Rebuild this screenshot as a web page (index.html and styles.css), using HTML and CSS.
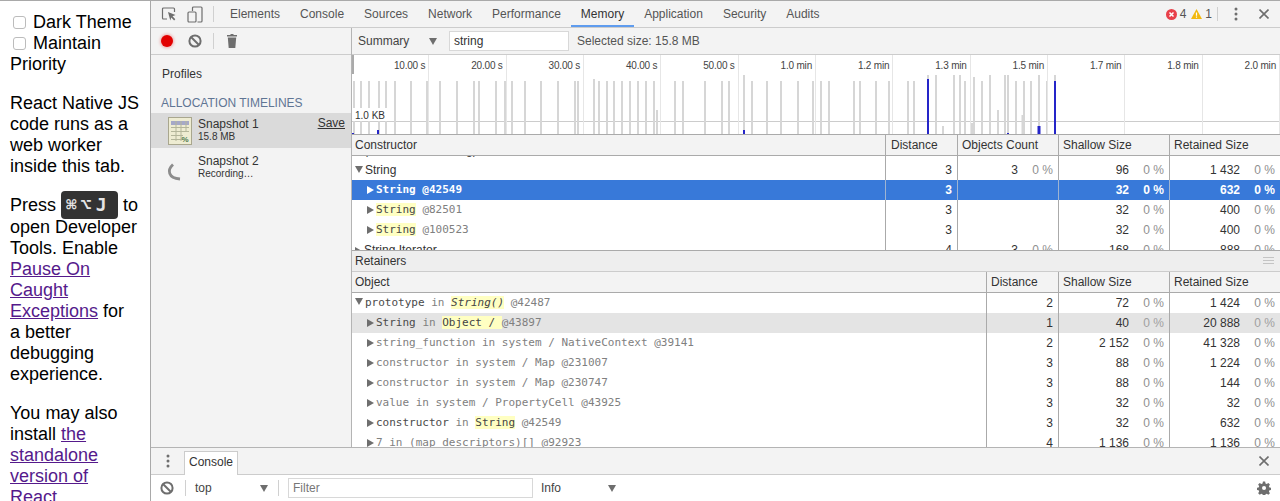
FILE: index.html
```html
<!DOCTYPE html>
<html lang="en">
<head>
<meta charset="utf-8">
<title>React Native Debugger</title>
<link rel="stylesheet" href="styles.css">
</head>
<body>
<div class="app">
  <aside class="page">
    <label class="opt"><input type="checkbox"> Dark Theme</label>
    <label class="opt"><input type="checkbox"> Maintain Priority</label>
    <p>React&nbsp;Native&nbsp;JS code runs as a web worker inside this tab.</p>
    <p>Press <kbd>⌘⌥J</kbd> to open Developer Tools. Enable <a href="#">Pause On Caught Exceptions</a> for a better debugging experience.</p>
    <p>You may also install <a href="#">the standalone version of React</a></p>
  </aside>
  <div class="devtools">
    <header class="tabbar">
      <div class="tool-icons">
        <svg class="ico" width="16" height="16" viewBox="0 0 16 16"><path d="M6 13H2.500a1 1 0 0 1-1-1V3a1 1 0 0 1 1-1h10a1 1 0 0 1 1 1v3" fill="none" stroke="#6e6e6e" stroke-width="1.200"/><path d="M7 6l7.500 3-3 1.200 2.800 3-1.200 1.200-2.800-3-1 3z" fill="#6e6e6e"/></svg>
        <svg class="ico" width="16" height="17" viewBox="0 0 16 17"><path d="M5.500 5V2a1 1 0 0 1 1-1h7.500a1 1 0 0 1 1 1v13a1 1 0 0 1-1 1h-3.500" fill="none" stroke="#6e6e6e" stroke-width="1.200"/><rect x="1" y="6" width="8" height="10" rx="1" fill="none" stroke="#6e6e6e" stroke-width="1.200"/></svg>
        <span class="vsep"></span>
      </div>
      <nav class="tabs">
        <span class="tab">Elements</span><span class="tab">Console</span><span class="tab">Sources</span><span class="tab">Network</span><span class="tab">Performance</span><span class="tab active">Memory</span><span class="tab">Application</span><span class="tab">Security</span><span class="tab">Audits</span>
      </nav>
      <div class="status">
        <svg width="11" height="11" viewBox="0 0 11 11"><circle cx="5.500" cy="5.500" r="5.500" fill="#e8404a"/><path d="M3.500 3.500l4 4M7.500 3.500l-4 4" stroke="#fff" stroke-width="1.500"/></svg>
        <span class="count">4</span>
        <svg class="warn" width="11" height="10" viewBox="0 0 11 10"><path d="M5.500 0L11 10H0z" fill="#f2b90f"/><path d="M5.500 3.500v3.200M5.500 7.600v1.200" stroke="#fff" stroke-width="1.200"/></svg>
        <span class="count">1</span>
        <span class="vsep"></span>
        <svg class="dots" width="4" height="14" viewBox="0 0 4 14"><circle cx="2" cy="2" r="1.500"/><circle cx="2" cy="7" r="1.500"/><circle cx="2" cy="12" r="1.500"/></svg>
        <svg class="close" width="10" height="10" viewBox="0 0 10 10"><path d="M.5.500l9 9M9.500.500l-9 9" stroke="#6e6e6e" stroke-width="1.600"/></svg>
      </div>
    </header>

    <div class="panel">
      <section class="sidebar">
        <div class="toolbar side-tools">
          <span class="rec"></span>
          <svg width="14" height="14" viewBox="0 0 14 14"><circle cx="7" cy="7" r="5.600" fill="none" stroke="#6e6e6e" stroke-width="2"/><path d="M3 3l8 8" stroke="#6e6e6e" stroke-width="2"/></svg>
          <span class="vsep"></span>
          <svg width="10" height="14" viewBox="0 0 10 14"><path d="M3.500 0h3v1H10v1.500H0V1h3.500zM.8 3.500h8.400L8.300 14H1.700z" fill="#6e6e6e"/></svg>
        </div>
        <div class="profiles">Profiles</div>
        <div class="group">ALLOCATION TIMELINES</div>
        <div class="snap selected">
          <svg class="snap-ico" width="24" height="28" viewBox="0 0 24 28"><rect x=".5" y=".5" width="23" height="27" fill="#eeecd2" stroke="#a9a78e"/><rect x="3" y="4" width="18" height="4" fill="#a6a9c8"/><path d="M3 10.500h18M3 14.500h18M3 18.500h12M3 22.500h12M8 4v20M13 4v20M18 4v11" stroke="#b4b69a"/><text x="13.500" y="25" class="snap-pct">%</text></svg>
          <div class="snap-text"><div class="snap-name">Snapshot 1</div><div class="snap-sub">15.8 MB</div></div>
          <span class="save">Save</span>
        </div>
        <div class="snap pending">
          <svg class="snap-ico" width="24" height="28" viewBox="0 0 24 28"><path d="M5 12.500C-1 18 0 26 12 27" fill="none" stroke="#8c8c8c" stroke-width="2.800"/></svg>
          <div class="snap-text"><div class="snap-name">Snapshot 2</div><div class="snap-sub">Recording…</div></div>
        </div>
      </section>

      <section class="main">
        <div class="toolbar main-tools">
          <span class="summary">Summary</span><span class="tri-down"></span>
          <span class="filter-box">string</span>
          <span class="selsize">Selected size: 15.8 MB</span>
        </div>

        <div class="overview">
          <svg class="chart" width="928" height="79" viewBox="0 0 928 79">
            <path class="hline" d="M0 66.500H928"/>
            <path class="bar" d="M2 26V79M9 26V79M17 26V79M27 26V79M34 26V79M43 26V79M59 26V79M75 26V79M88 26V79M105 26V79M122 26V79M127 26V79M144 26V79M153 26V79M160 26V79M173 26V79M189 26V79M206 26V79M223 26V79M226 26V79M242 24V79M247 26V79M255 26V79M262 26V79M270 26V79M278 26V79M286 26V79M294 26V79M302 26V79M305 55V79M323 26V79M331 26V79M353 26V79M370 26V79M377 26V79M392 20V79M400 26V79M415 26V79M429 26V79M446 26V79M461 26V79M469 26V79M477 26V79M502 26V79M508 26V79M524 26V79M537 26V79M556 26V79M562 26V79M576 20V79M584 20V79M591 71V79M602 20V79M608 20V79M613 26V79M622 22V79M630 26V79M638 20V79M646 55V79M653 20V79M656 20V79M664 26V79M672 26V79M679 26V79M687 20V79M695 26V79M703 20V79"/>
            <path class="bar wide" d="M620 68V79M671 60V79"/>
            <path class="blue" d="M1 78V79M26 75V79M392 75V79M576 24V79M656 78V79M703 26V79"/>
            <path class="blue wide" d="M687 71V79"/>
          </svg>
          <div class="ticks">
            <span>10.00 s</span><span>20.00 s</span><span>30.00 s</span><span>40.00 s</span><span>50.00 s</span><span>1.0 min</span><span>1.2 min</span><span>1.3 min</span><span>1.5 min</span><span>1.7 min</span><span>1.8 min</span><span>2.0 min</span>
          </div>
          <span class="thumb"></span>
          <span class="kb">1.0 KB</span>
        </div>

        <div class="row-top head">
          <div class="cell name">Constructor</div><div class="cell">Distance</div><div class="cell">Objects Count</div><div class="cell">Shallow Size</div><div class="cell last">Retained Size</div>
        </div>
        <div class="rows rows-top">
          <div class="row-top row clipped-first">
            <div class="cell name l1"><span class="arrow right"></span>(concatenated string)</div>
            <div class="cell num">4</div><div class="cell num"><span>4</span><i>0 %</i></div><div class="cell num"><span>1</span><i>0 %</i></div><div class="cell num last"><span>1</span><i>0 %</i></div>
          </div>
          <div class="row-top row">
            <div class="cell name l1"><span class="arrow down"></span>String</div>
            <div class="cell num">3</div><div class="cell num"><span>3</span><i>0 %</i></div><div class="cell num"><span>96</span><i>0 %</i></div><div class="cell num last"><span>1 432</span><i>0 %</i></div>
          </div>
          <div class="row-top row sel">
            <div class="cell name l2 code"><span class="arrow right"></span>String @42549</div>
            <div class="cell num">3</div><div class="cell num"></div><div class="cell num"><span>32</span><i>0 %</i></div><div class="cell num last"><span>632</span><i>0 %</i></div>
          </div>
          <div class="row-top row">
            <div class="cell name l2 code"><span class="arrow right"></span><mark>String</mark> <em>@82501</em></div>
            <div class="cell num">3</div><div class="cell num"></div><div class="cell num"><span>32</span><i>0 %</i></div><div class="cell num last"><span>400</span><i>0 %</i></div>
          </div>
          <div class="row-top row">
            <div class="cell name l2 code"><span class="arrow right"></span><mark>String</mark> <em>@100523</em></div>
            <div class="cell num">3</div><div class="cell num"></div><div class="cell num"><span>32</span><i>0 %</i></div><div class="cell num last"><span>400</span><i>0 %</i></div>
          </div>
          <div class="row-top row">
            <div class="cell name l1"><span class="arrow right"></span>String Iterator</div>
            <div class="cell num">4</div><div class="cell num"><span>3</span><i>0 %</i></div><div class="cell num"><span>168</span><i>0 %</i></div><div class="cell num last"><span>888</span><i>0 %</i></div>
          </div>
        </div>

        <div class="retainers"><span>Retainers</span>
          <svg width="11" height="8" viewBox="0 0 11 8"><path d="M0 .5h11M0 3.500h11M0 6.500h11" stroke="#c4c4c4"/></svg>
        </div>
        <div class="row-bot head">
          <div class="cell name">Object</div><div class="cell">Distance</div><div class="cell">Shallow Size</div><div class="cell last">Retained Size</div>
        </div>
        <div class="rows rows-bot">
          <div class="row-bot row">
            <div class="cell name l1 code"><span class="arrow down"></span><b>prototype</b> <em>in</em> <mark class="it">String()</mark> <em>@42487</em></div>
            <div class="cell num">2</div><div class="cell num"><span>72</span><i>0 %</i></div><div class="cell num last"><span>1 424</span><i>0 %</i></div>
          </div>
          <div class="row-bot row hl">
            <div class="cell name l2 code"><span class="arrow right"></span><b>String</b> <em>in</em> <mark>Object / </mark><em>@43897</em></div>
            <div class="cell num">1</div><div class="cell num"><span>40</span><i>0 %</i></div><div class="cell num last"><span>20 888</span><i>0 %</i></div>
          </div>
          <div class="row-bot row">
            <div class="cell name l2 code dim"><span class="arrow right"></span>string_function in system / NativeContext @39141</div>
            <div class="cell num">2</div><div class="cell num"><span>2 152</span><i>0 %</i></div><div class="cell num last"><span>41 328</span><i>0 %</i></div>
          </div>
          <div class="row-bot row">
            <div class="cell name l2 code dim"><span class="arrow right"></span>constructor in system / Map @231007</div>
            <div class="cell num">3</div><div class="cell num"><span>88</span><i>0 %</i></div><div class="cell num last"><span>1 224</span><i>0 %</i></div>
          </div>
          <div class="row-bot row">
            <div class="cell name l2 code dim"><span class="arrow right"></span>constructor in system / Map @230747</div>
            <div class="cell num">3</div><div class="cell num"><span>88</span><i>0 %</i></div><div class="cell num last"><span>144</span><i>0 %</i></div>
          </div>
          <div class="row-bot row">
            <div class="cell name l2 code dim"><span class="arrow right"></span>value in system / PropertyCell @43925</div>
            <div class="cell num">3</div><div class="cell num"><span>32</span><i>0 %</i></div><div class="cell num last"><span>32</span><i>0 %</i></div>
          </div>
          <div class="row-bot row">
            <div class="cell name l2 code"><span class="arrow right"></span><b>constructor</b> <em>in</em> <mark>String</mark> <em>@42549</em></div>
            <div class="cell num">3</div><div class="cell num"><span>32</span><i>0 %</i></div><div class="cell num last"><span>632</span><i>0 %</i></div>
          </div>
          <div class="row-bot row">
            <div class="cell name l2 code dim"><span class="arrow right"></span><b>7</b> in (map descriptors)[] @92923</div>
            <div class="cell num">4</div><div class="cell num"><span>1 136</span><i>0 %</i></div><div class="cell num last"><span>1 136</span><i>0 %</i></div>
          </div>
        </div>
      </section>
    </div>

    <footer class="drawer">
      <div class="drawer-tabs">
        <svg class="dots drawer-dots" width="4" height="14" viewBox="0 0 4 14"><circle cx="2" cy="2" r="1.500"/><circle cx="2" cy="7" r="1.500"/><circle cx="2" cy="12" r="1.500"/></svg>
        <span class="drawer-tab">Console</span>
        <svg class="close" width="10" height="10" viewBox="0 0 10 10"><path d="M.5.500l9 9M9.500.500l-9 9" stroke="#6e6e6e" stroke-width="1.600"/></svg>
      </div>
      <div class="console-bar">
        <svg width="14" height="14" viewBox="0 0 14 14"><circle cx="7" cy="7" r="5.600" fill="none" stroke="#6e6e6e" stroke-width="2"/><path d="M3 3l8 8" stroke="#6e6e6e" stroke-width="2"/></svg>
        <span class="vsep sep-a"></span>
        <span class="ctx">top</span><span class="tri-down"></span>
        <span class="vsep sep-b"></span>
        <span class="filter-input">Filter</span>
        <span class="level">Info</span><span class="tri-down"></span>
        <svg class="gear" width="14" height="14" viewBox="0 0 14 14"><path fill="#6e6e6e" fill-rule="evenodd" d="M5.800 0h2.400l.4 2 1.300.6 1.800-1.100 1.700 1.700-1.100 1.800.6 1.300 2 .4v2.400l-2 .4-.6 1.300 1.100 1.800-1.700 1.700-1.800-1.100-1.300.6-.4 2H5.800l-.4-2-1.300-.6-1.800 1.100L.6 12.600l1.100-1.800-.6-1.300-2-.4V6.700l2-.4.6-1.300L.6 3.200l1.700-1.700 1.800 1.100 1.300-.6zM7 4.800a2.200 2.200 0 1 0 0 4.400 2.200 2.200 0 0 0 0-4.400z" transform="translate(.6 .6) scale(.92)"/></svg>
      </div>
    </footer>
  </div>
</div>
</body>
</html>
```
FILE: styles.css
```css
* { box-sizing: border-box; }
html, body { margin: 0; height: 501px; overflow: hidden; background: #fff; }
body { font-family: "Liberation Sans", Arial, sans-serif; }

.app { display: flex; height: 501px; border-top: 1px solid #a9a9a9; }

/* Left page */
.page {
  width: 151px; flex: none; height: 500px; overflow: hidden;
  border-right: 1px solid #a9a9a9;
  padding: 11px 11px 0 10px;
  font-size: 18px; line-height: 21px; color: #000;
}
.opt { display: block; }
.opt input {
  appearance: none; margin: 0 2px 0 3px; width: 13px; height: 13px; vertical-align: -1px;
  background: #fff; border: 1px solid #bcbcbc; border-radius: 3px;
}
.page p { margin: 18px 0 0; }
.page a { color: #551a8b; text-decoration: underline; }
kbd {
  display: inline-block; height: 28px; margin: -4px 0 -2px; padding: 0 0 0 5px; width: 57px;
  background: #333; color: #e4e4e4; border-radius: 4px;
  font: bold 18px/27px "DejaVu Sans Mono", monospace; letter-spacing: 4px; vertical-align: 0;
}

/* DevTools frame */
.devtools { flex: 1; min-width: 0; display: flex; flex-direction: column; background: #f3f3f3; font-size: 12px; color: #333; }
.vsep { display: block; width: 1px; height: 16px; background: #d0d0d0; flex: none; }

.tabbar { height: 27px; flex: none; display: flex; align-items: center; border-bottom: 1px solid #ccc; }
.tool-icons { display: flex; align-items: center; padding-left: 10px; width: 69px; flex: none; }
.tool-icons .ico:nth-child(2) { margin-left: 10px; }
.tool-icons .vsep { margin-left: 10px; }
.tabs { display: flex; height: 26px; }
.tab { padding: 0 10px; line-height: 27px; color: #555; white-space: nowrap; }
.tab.active { color: #333; border-bottom: 2px solid #5f9cee; height: 26px; }
.status { margin-left: auto; display: flex; align-items: center; color: #555; }
.count { margin-left: 3px; font-size: 12px; }
.warn { margin-left: 5px; }
.status .vsep { margin-left: 5px; height: 14px; }
.dots { fill: #6e6e6e; }
.status .dots { margin-left: 16px; }
.close { margin-left: 21px; margin-right: 11px; }

.panel { height: 419px; flex: none; display: flex; }
.toolbar { height: 27px; flex: none; display: flex; align-items: center; border-bottom: 1px solid #ccc; }

/* Sidebar */
.sidebar { width: 201px; flex: none; border-right: 1px solid #b4b4b4; }
.side-tools { padding-left: 10px; }
.rec { width: 12px; height: 12px; border-radius: 50%; background: #e20000; box-shadow: 0 0 3px 1px rgba(226, 0, 0, .3); }
.side-tools svg:nth-of-type(1) { margin-left: 15px; }
.side-tools .vsep { margin-left: 11px; }
.side-tools svg:nth-of-type(2) { margin-left: 13px; }
.profiles { padding: 12px 0 0 11px; line-height: 15px; height: 34px; color: #333; }
.group { padding-left: 10px; line-height: 15px; height: 24px; padding-top: 7px; color: #5f7594; }
.snap { height: 35px; display: flex; align-items: center; padding: 0 6px 0 17px; }
.snap.selected { background: #dadada; }
.snap-ico { flex: none; overflow: visible; }
.snap-pct { font: bold 8px "Liberation Sans", sans-serif; fill: #4d7a4d; }
.snap-text { margin-left: 6px; }
.snap-name { line-height: 14px; margin-top: -3px; color: #333; }
.snap-sub { font-size: 10px; line-height: 11px; color: #333; }
.pending .snap-text { margin-top: 4px; }
.save { margin-left: auto; align-self: flex-start; margin-top: 3px; text-decoration: underline; color: #333; }

/* Main */
.main { width: 928px; flex: none; background: #fff; display: flex; flex-direction: column; }
.main-tools { background: #f3f3f3; padding-left: 6px; }
.summary { width: 71px; color: #444; }
.tri-down { width: 0; height: 0; border-left: 4.500px solid transparent; border-right: 4.500px solid transparent; border-top: 7px solid #6e6e6e; flex: none; }
.filter-box { margin-left: 12px; width: 120px; height: 20px; background: #fff; border: 1px solid #d8d8d8; padding-left: 4px; line-height: 18px; color: #333; }
.selsize { margin-left: 8px; color: #555; }

.overview { height: 80px; flex: none; position: relative; background: #fff; border-bottom: 1px solid #aaa; overflow: hidden; }
.chart { display: block; }
.hline { stroke: #ccc; fill: none; }
.bar { stroke: #d6d6d6; stroke-width: 2; fill: none; }
.blue { stroke: #2525c8; stroke-width: 2; fill: none; }
path.wide { stroke-width: 3; }
.ticks { position: absolute; inset: 0; display: grid; grid-template-columns: repeat(12, 1fr); }
.ticks span { border-right: 1px solid #e6e6e6; text-align: right; padding: 4px 3px 0 0; font-size: 10px; line-height: 13px; color: #444; letter-spacing: -.2px; }
.thumb { position: absolute; left: 0; top: 0; width: 2px; height: 19px; background: #aaa; }
.kb { position: absolute; left: 0; top: 53px; padding: 0 1px 0 3px; width: 36px; height: 13px; background: #fff; font-size: 10px; line-height: 15px; color: #333; overflow: hidden; }

/* Tables */
.row-top { display: grid; grid-template-columns: 534px 72px 101px 111px 110px; }
.row-bot { display: grid; grid-template-columns: 635px 72px 111px 110px; }
.cell { border-right: 1px solid #aaa; padding: 0 5px 0 4px; white-space: nowrap; overflow: hidden; }
.cell.last { border-right: 0; }
.head { height: 21px; flex: none; background: #f3f3f3; border-bottom: 1px solid #aaa; line-height: 20px; color: #333; }
.row-top.head .cell:nth-child(2) { padding-left: 5px; }
.rows { overflow: hidden; flex: none; background: #fff; }
.rows-top { height: 94px; }
.rows-bot { height: 154px; }
.row { height: 20px; line-height: 20px; color: #333; }
.clipped-first { margin-top: -16px; }
.num { display: flex; justify-content: flex-end; }
.num i { width: 35px; text-align: right; font-style: normal; color: #909090; }
.name { padding-left: 3px; white-space: pre; }
.name.l2 { padding-left: 15px; }
.code { font: 11px/19px "DejaVu Sans Mono", monospace; }
.code b { font-weight: normal; color: #4a4a4a; }
.code em { font-style: normal; color: #808080; }
.code.dim, .code.dim b { color: #808080; }
mark { background: #ffffc2; color: #444; }
mark.it { font-style: italic; }
.arrow { display: inline-block; width: 0; height: 0; }
.arrow.right { border-top: 4.500px solid transparent; border-bottom: 4.500px solid transparent; border-left: 7px solid #6e6e6e; margin-right: 2px; vertical-align: -1px; }
.arrow.down { border-left: 4.500px solid transparent; border-right: 4.500px solid transparent; border-top: 7px solid #6e6e6e; margin-right: 2px; vertical-align: 1px; }
.sel, .sel .num i { background: #3879d9; color: #fff; font-weight: bold; }
.sel .code { font-weight: bold; }
.sel .cell { border-right-color: #9fb4d2; }
.sel .arrow.right { border-left-color: #fff; }
.hl { background: #e4e4e4; }
.hl .num i { background: none; color: #a0a0a0; }

.retainers { height: 22px; flex: none; display: flex; align-items: center; justify-content: space-between; padding: 0 6px 0 3px; background: #eee; border-top: 1px solid #aaa; border-bottom: 1px solid #ccc; color: #333; }

/* Drawer */
.drawer { flex: none; height: 54px; border-top: 1px solid #b4b4b4; }
.drawer-tabs { height: 27px; display: flex; align-items: center; border-bottom: 1px solid #ccc; }
.drawer-dots { margin-left: 15px; }
.drawer-tab { margin-left: 14px; height: 24px; align-self: flex-end; padding: 0 4px; margin-bottom: -1px; line-height: 21px; background: #fff; border: 1px solid #ccc; border-bottom: 0; color: #333; }
.drawer-tabs .close { margin-left: auto; }
.console-bar { height: 26px; display: flex; align-items: center; background: #fff; padding-left: 9px; }
.sep-a { margin-left: 11px; }
.ctx { margin-left: 9px; width: 65px; color: #444; }
.sep-b { margin-left: 10px; }
.filter-input { margin-left: 9px; width: 245px; height: 20px; border: 1px solid #d8d8d8; padding-left: 4px; line-height: 18px; color: #777; }
.level { margin-left: 8px; width: 67px; color: #444; }
.gear { margin-left: auto; margin-right: 9px; }
```
